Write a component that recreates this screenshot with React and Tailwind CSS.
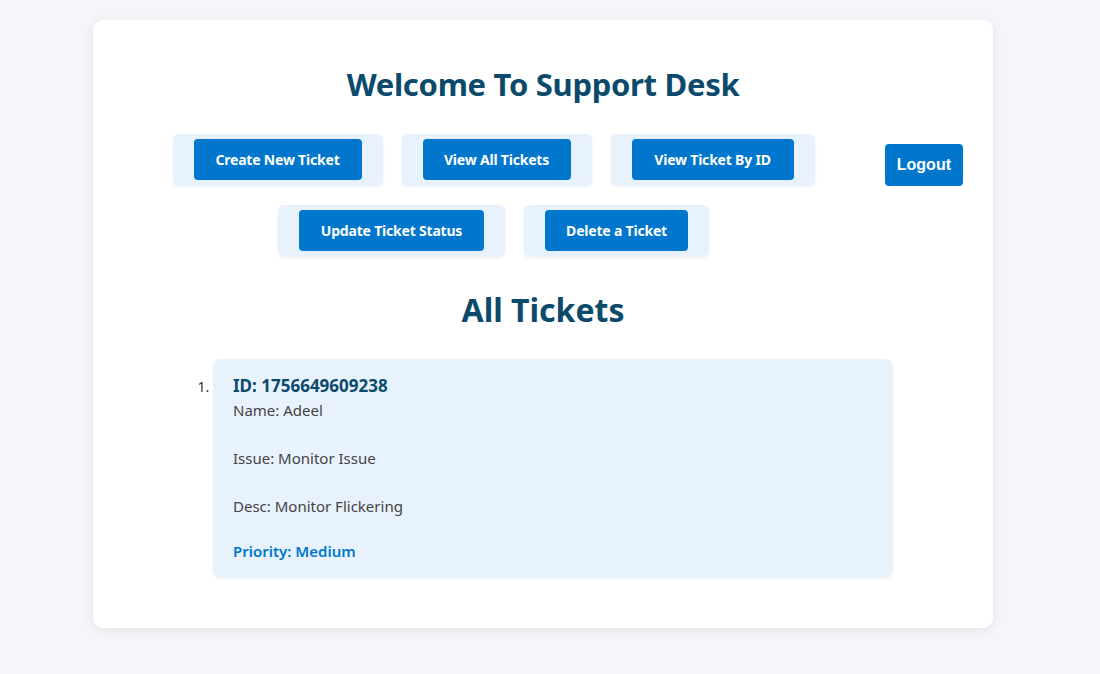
const actions = [
  [
    ["Create New Ticket", "w-[168px]"],
    ["View All Tickets", "w-[148px]"],
    ["View Ticket By ID", "w-[162px]"],
  ],
  [
    ["Update Ticket Status", "w-[185px]"],
    ["Delete a Ticket", "w-[143px]"],
  ],
];

const tickets = [
  {
    id: "1756649609238",
    name: "Adeel",
    issue: "Monitor Issue",
    desc: "Monitor Flickering",
    priority: "Medium",
  },
];

function ActionButton({ label, width }) {
  return (
    <div className="bg-[#e8f2fc] rounded-md px-[21px] pt-[5px] pb-[6px] shadow-[0_1px_3px_rgba(0,0,0,0.06)]">
      <button
        className={`${width} bg-[#0077cc] text-white font-bold text-[14px] tracking-[-0.2px] whitespace-nowrap h-[41px] rounded`}
      >
        {label}
      </button>
    </div>
  );
}

export default function App() {
  return (
    <div className="min-h-[674px] bg-[#f4f6fa] pt-5 pb-10 font-['Noto_Sans',sans-serif]">
      <div className="w-[900px] ml-[93px] bg-white rounded-[10px] shadow-[0_2px_12px_rgba(0,0,0,0.08)] pt-[44px] pb-[50px]">
        <h1 className="text-center text-[31px] leading-[40px] font-bold text-[#0b4a6b] tracking-[-0.3px]">
          Welcome To Support Desk
        </h1>

        {/* Actions */}
        <div className="flex mt-[30px]">
          <div className="ml-[81px] w-[639px] flex flex-col gap-[19px]">
            {actions.map((row, i) => (
              <div key={i} className="flex justify-center gap-[19px]">
                {row.map(([label, width]) => (
                  <ActionButton key={label} label={label} width={width} />
                ))}
              </div>
            ))}
          </div>
          <button className="ml-auto mr-[30px] mt-[10px] self-start h-[42px] px-3 bg-[#0077cc] text-white font-bold text-[16px] rounded font-['Liberation_Sans',sans-serif]">
            Logout
          </button>
        </div>

        <h2 className="text-center text-[32px] leading-[40px] font-bold text-[#0b4a6b] mt-[33px]">
          All Tickets
        </h2>

        <ol className="list-decimal ml-[120px] mt-[29px] w-[680px] text-[15px]">
          {tickets.map((t) => (
            <li key={t.id} className="marker:text-[#333] marker:text-[14px]">
              <div className="bg-[#e8f2fc] rounded-lg px-5 pt-[15px] pb-[16px] shadow-[0_1px_3px_rgba(0,0,0,0.05)]">
                <h3 className="text-[17px] leading-[24px] font-bold text-[#0b4a6b]">ID: {t.id}</h3>
                <p className="text-[#444] leading-[22px] mt-[1px]">Name: {t.name}</p>
                <p className="text-[#444] leading-[22px] mt-[26px]">Issue: {t.issue}</p>
                <p className="text-[#444] leading-[22px] mt-[26px]">Desc: {t.desc}</p>
                <p className="text-[#0077cc] font-semibold leading-[22px] mt-[23px]">
                  Priority: {t.priority}
                </p>
              </div>
            </li>
          ))}
        </ol>
      </div>
    </div>
  );
}
